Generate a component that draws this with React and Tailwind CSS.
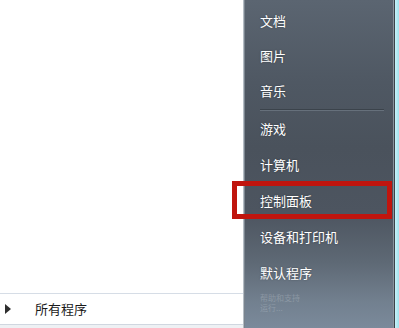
const font = { fontFamily: '"Noto Sans CJK SC", "Noto Sans", sans-serif' };

const topItems = ["文档", "图片", "音乐"];
const bottomItems = ["游戏", "计算机", "控制面板", "设备和打印机", "默认程序"];

function Item({ label }) {
  return (
    <div className="flex items-center pl-[15px] text-[13px] text-white [text-shadow:0_0_2px_rgba(0,0,0,0.35)] h-[35px]">
      {label}
    </div>
  );
}

export default function App() {
  return (
    <div className="relative w-[399px] h-[328px] flex overflow-hidden bg-white" style={font}>
      {/* left white panel */}
      <div className="w-[243px] h-full flex flex-col justify-end bg-white">
        <div className="h-px bg-[#d6dde6]" />
        <div className="h-[30px] flex items-center">
          <div className="w-[35px] flex items-center pl-[5px]">
            <div className="w-0 h-0 border-y-[5px] border-y-transparent border-l-[6px] border-l-[#2e2e2e]" />
          </div>
          <span className="text-[13px] text-[#1a1a1a]">所有程序</span>
        </div>
        <div className="h-px bg-[#d0d7e0]" />
        <div className="h-[3px] bg-[#eef1f4]" />
      </div>
      <div className="w-px h-full bg-[#b4bcc4]" />
      <div className="w-px h-full bg-[#7a848e]" />

      {/* dark right panel */}
      <div className="w-[148px] h-full flex flex-col pt-[3px] bg-[linear-gradient(180deg,#5b6571_0%,#4f5863_25%,#4a525c_45%,#4d5560_65%,#5e6975_80%,#72808f_92%,#7b8a9b_100%)]">
        {topItems.map((t) => (
          <Item key={t} label={t} />
        ))}
        <div className="h-[2px] flex flex-col ml-[15px] mr-[9px] mt-px">
          <div className="h-px bg-[#3b434b]" />
          <div className="h-px bg-[#66707b]" />
        </div>
        <div className="flex flex-col">
          {bottomItems.map((t) => (
            <div key={t} className="flex items-center pl-[15px] text-[13px] text-white [text-shadow:0_0_2px_rgba(0,0,0,0.35)] h-[36px]">
              {t}
            </div>
          ))}
          <div className="flex flex-col pl-[15px] pt-[2px] text-[8px] leading-[10px] text-[#c8d0d8] opacity-30">
            <span>帮助和支持</span>
            <span>运行...</span>
          </div>
        </div>
      </div>
      <div className="w-px h-full bg-[#8a949e]" />
      <div className="w-px h-full bg-[#3a424a]" />
      <div className="w-[4px] h-full bg-[linear-gradient(90deg,#c8f2f8,#a2e2ee)]" />

      {/* red highlight annotation */}
      <div className="absolute left-[232px] top-[181px] w-[160px] h-[38px] border-[5px] border-[#c0150e]" />
    </div>
  );
}
